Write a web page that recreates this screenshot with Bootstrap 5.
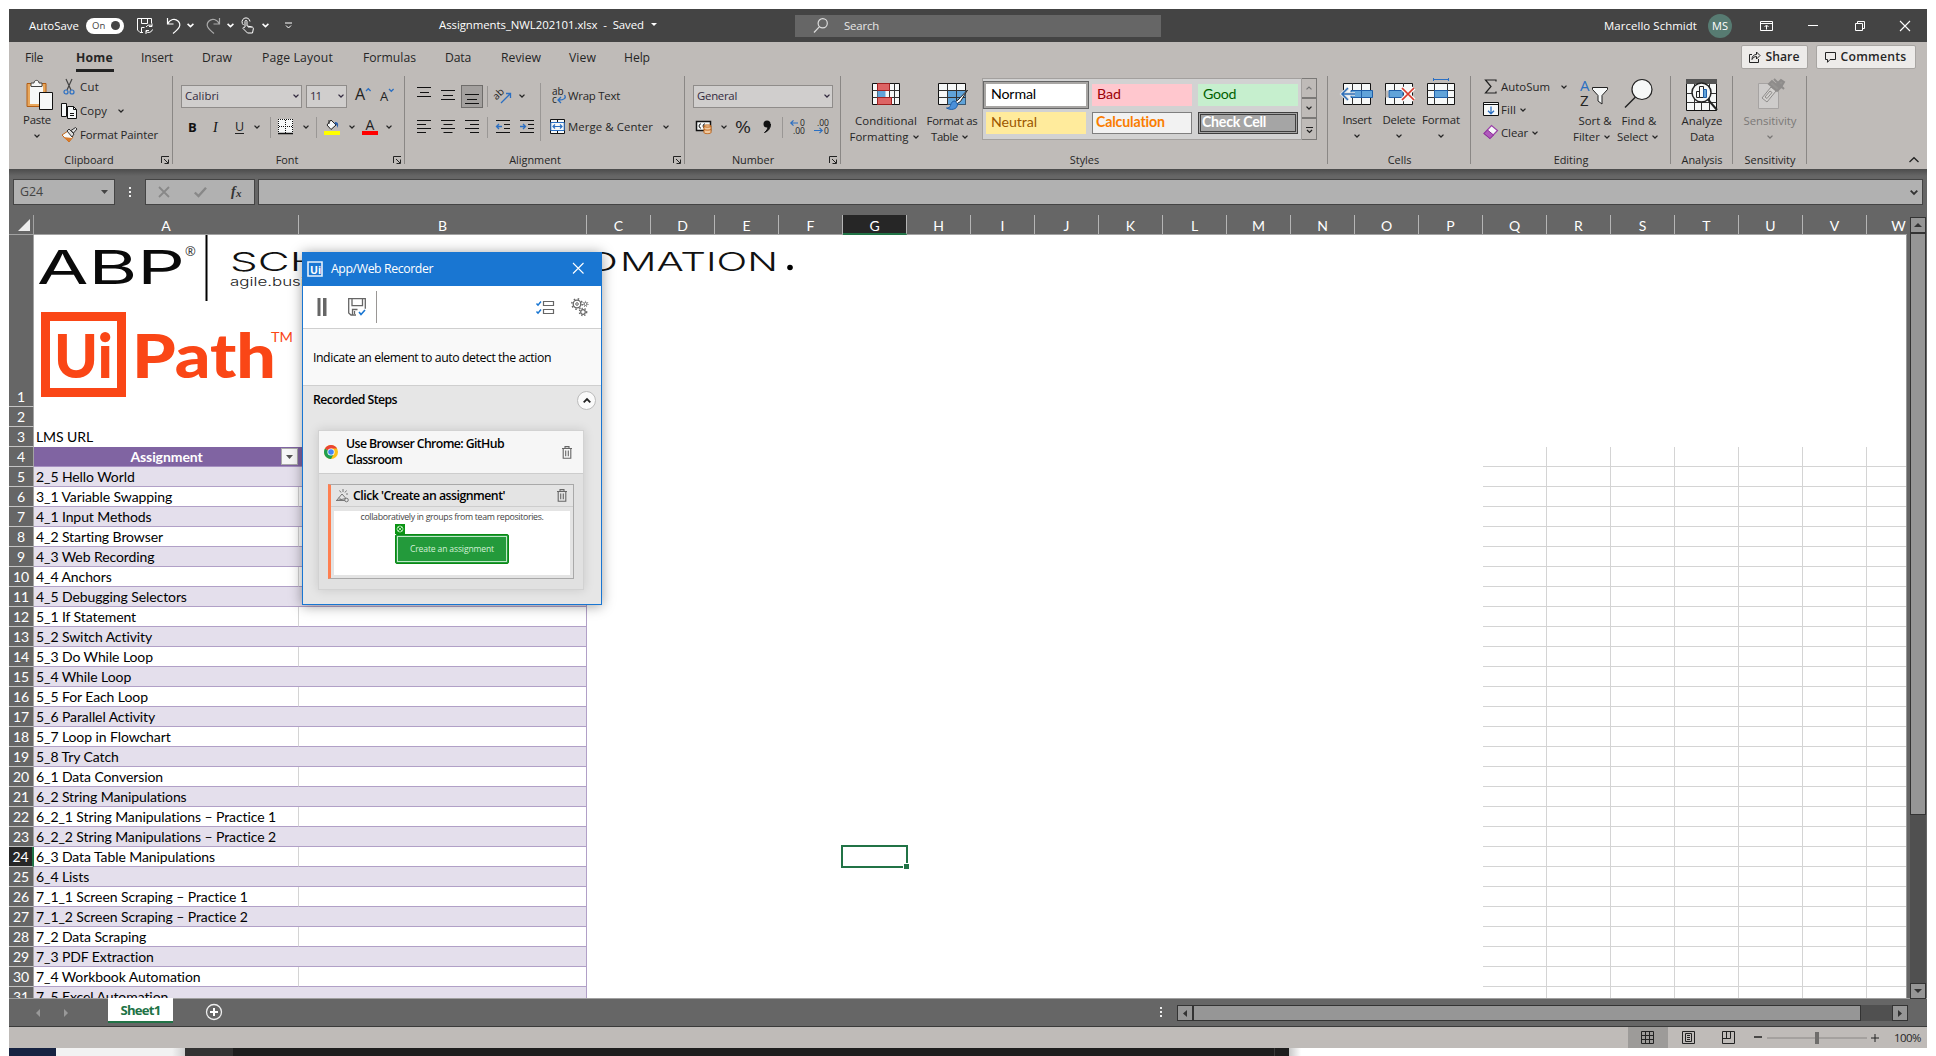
<!DOCTYPE html>
<html lang="en">
<head>
<meta charset="utf-8">
<title>Assignments_NWL202101.xlsx - Excel</title>
<link href="https://cdn.jsdelivr.net/npm/bootstrap@5.3.0/dist/css/bootstrap.min.css" rel="stylesheet">
<style>
:root{--ui:"Open Sans","Noto Sans",sans-serif;--sheet:Lato,"Open Sans",sans-serif;--dark:#444;--mid:#666;--rib:#bfbbb8;--ink:#262626}
body{width:1936px;height:1056px;overflow:hidden;background:#fff;font:11.4px/16px var(--ui);color:var(--ink)}
svg{display:block;overflow:visible;flex:none}
.fit{white-space:pre;justify-self:start}
.app{width:1918px;margin:9px 0 0 9px;height:1039px;background:var(--mid)}
.titlebar{height:33px;background:var(--dark);color:#fff;padding-left:20px;grid-template-columns:57px 51px 29px 21px 18px 22px 14px 21px 23px 154px 356px 809px 104px 52px 48px 47px 45px 27px}
.toggle{width:38px;height:16px;border-radius:8px;background:#fff;color:#444;font-size:9.5px;line-height:16px;padding:0 4px 0 6px}
.knob{width:9px;height:9px;border-radius:50%;background:#444}
.searchbox{width:366px;height:22px;background:var(--mid);color:#e6e6e6;padding-left:19px;gap:16px}
.avatar{width:24px;height:24px;border-radius:50%;background:#577b72;font-size:11px}
.doctitle{padding-bottom:2px}
.tabs{height:33px;background:var(--rib);font-size:12.2px;padding-left:16px;grid-template-columns:51px 65px 61px 60px 101px 82px 56px 68px 55px 1117px 75px 100px}
.tabs>.fit{height:24px;line-height:21px}
.tabs>.on{font-weight:700;border-bottom:3px solid #222;height:25px;line-height:21px;margin-top:2px;width:38px}
.wbtn{background:#edebe9;border:1px solid #a8a5a2;border-radius:2px;height:24px;margin-bottom:3px;gap:4px;font-weight:600}
.ribbon{height:94px;background:var(--rib)}
.grp{height:94px;background:linear-gradient(#8a8785,#8a8785) right 1px/1px 88px no-repeat}
.grp-body{height:77px}
.grp-label{height:17px;line-height:15px;font-size:10.9px;text-align:center;grid-template-columns:8px 1fr 12px}
.r24{height:24px}.r23{height:23px}.r32{height:32px}.r31{height:30px}
.big{line-height:16px;text-align:center}
.big svg{margin-inline:auto}
.cap2{height:16px;margin-top:2px}
.ctext{margin-top:6px}
.vchev{margin-top:6px}
.combo{height:23px;background:#d0cecd;border:1px solid #8f8c8a;padding:0 2px 0 3px;color:#332b40;line-height:20px}
.vsep{width:1px;height:21px;background:#9a9795}
.pressed{background:#a3a09e;border:1px solid #6f6d6b;width:22px;height:23px}
.gallery{width:320px;height:62px;background:#d2d2d2;border:1px solid #a3a09e;padding:5px 3px;grid-template-columns:100px 100px 100px;gap:6px;font:14.2px/20px var(--sheet)}
.gallery>div{height:22px;padding-left:5px}
.galwrap{margin:3px 0 0 9px}
.st-normal{background:#fff;color:#000;outline:2px solid #a8a6a4;box-shadow:0 0 0 3px #666}
.st-bad{background:#ffc7ce;color:#9c0006}.st-good{background:#c6efce;color:#006100}.st-neutral{background:#ffeb9c;color:#9c5700}
.st-calc{background:#f2f2f2;color:#fa7d00;border:1px solid #7f7f7f;font-weight:700;line-height:18px}
.gallery>.st-calc{padding-left:3px}
.st-check{background:#a5a5a5;color:#fff;border:3px double #3f3f3f;font-weight:700;line-height:14px}
.gallery>.st-check{padding-left:1px}
.gscroll{width:15px;height:62px;border:1px solid #7b7977;border-left:0}
.gscroll>div{border-bottom:2px solid #7b7977;height:20px}
.gscroll>div:last-child{border:0;height:21px}
.fbar{height:46px;padding-top:10px;padding-left:4px;background:linear-gradient(#4c4c4c,#666 7px)}
.fbox{height:26px;background:#b1b1b1;border:1px solid #444;color:#444}
.namebox{width:102px;padding:0 6px 0 6px;font-size:12.4px}
.fxbox{width:110px;margin-right:3px;grid-template-columns:36px 36px 38px}
.sheet{width:1898px;height:783px;overflow:hidden}
.colhead{height:20px;border-bottom:1px solid #a3a3a3;color:#fff;font:14px/21px var(--sheet);width:1960px}
.colhead>div{width:64px;flex:none;text-align:center;border-right:1px solid #b5b5b5;height:19px}
.colhead>.corner{width:25px;border-color:#a3a3a3;padding:4px 0 0 9px}
.colhead>.ca{width:265px}.colhead>.cb{width:288px}
.colhead>.sel{background:#262626;height:20px;border-bottom:2px solid #217346}
.cells{height:763px;background:#fff;overflow:hidden;border-right:1px solid #999;font:14px/19px var(--sheet);color:#000}
.gridlines{left:1474px;top:212px;right:0;bottom:0;background:repeating-linear-gradient(90deg,transparent 0 63px,#d4d4d4 63px 64px),repeating-linear-gradient(transparent 0 19px,#d4d4d4 19px 20px)}
.line{height:20px}
.line>div{flex:none;height:20px}
.rh{width:25px;background:var(--mid);color:#fff;border-bottom:1px solid #c4c4c4;border-right:1px solid #a3a3a3;text-align:center}
.rh.sel{background:#262626;border-right:2px solid #217346}
.line.tall,.line>.tall-h{height:172px}
.line>.tall-h{padding-top:152px}
.tA{width:265px;padding-left:2px;white-space:nowrap;letter-spacing:-.006em}
.tB{width:288px}
.hd>.tA,.hd>.tB{background:#8064a2;color:#fff;font-weight:700;border-bottom:1px solid #a58fc0}
.hd .lab{flex:1;text-align:center;padding-left:16px}
.dd{width:17px;height:17px;background:#f7f7f7;border:1px solid #aaa;margin-right:1px}
.odd>.tA,.odd>.tB{background:#e4dfec}
.odd>.tA,.odd>.tB,.even>.tA,.even>.tB{border-bottom:1px solid #b1a0c7}
.even>.tA{border-right:1px solid #d4d4d4}
.odd>.tB,.even>.tB,.hd>.tB{border-right:1px solid #b1a0c7}
.pics{left:25px;top:0}
.cursor{left:832px;top:610px}
.vscroll{width:20px;height:783px;padding:2px 0 0 3px}
.sbtn{background:#969696;border:1px solid #333;width:16px;height:16px}
.vtrack{background:#505050;width:16px;height:750px}
.vthumb{background:#969696;border:1px solid #333;height:582px}
.tabbar{height:28px;border-top:1px solid #a0a0a0;color:#fff}
.nav-arrows{width:99px;padding-left:27px;gap:23px}
.stab{width:65px;height:25px;margin-top:-1px;background:#fff;border-bottom:2px solid #217346;color:#217346;font:bold 13.2px/25px var(--ui);text-align:center}
.addsheet{margin:4px 0 0 40px}
.htrack{width:731px;height:16px;background:#505050;margin:6px 19px 0 0}
.hthumb{width:668px;height:16px;background:#969696;border:1px solid #333}
.status{height:22px;background:var(--rib);border-top:1px solid #3a3a3a;padding-left:1619px;grid-template-columns:40px 40px 40px 12px 14px 101px 19px 30px}
.viewon{background:#9d9b99;width:40px;height:21px;padding-right:2px}
.under{margin-left:9px;height:8px}
.under>div{height:8px}
.u1{width:47px;background:#172342}.u2{width:129px;background:linear-gradient(90deg,#f2f2f2 90%,#d0d0d0)}.u3{width:48px;background:#333}.u4{width:1056px;background:linear-gradient(90deg,#1e1e1e 1041px,#3a3a3a 1041px 1042px,#1e1e1e 1042px)}.u5{width:12px;background:linear-gradient(90deg,#c8c8c8,#fff)}
.recorder{left:302px;top:252px;width:300px;height:353px;background:#e6e6e6;border:1px solid #1976d2;box-shadow:0 1px 12px rgba(0,0,0,.38);color:#000;font-size:12.3px}
.rtitle{height:33px;background:#1976d2;color:#fff;padding-left:4px;padding-bottom:2px;grid-template-columns:24px 238px 20px}
.rtools{height:43px;background:#fff;border-bottom:1px solid #cfcfcf;padding-left:14px;grid-template-columns:31px 28px 160px 35px 20px}
.rmsg{height:57px;background:#f9f9f9;border-bottom:1px solid #cfcfcf;padding-left:10px;line-height:58px}
.rhead{height:28px;padding:0 5px 0 10px}
.rhead .fit{padding-bottom:1px}
.rb{font-weight:600}
.round{width:19px;height:19px;border-radius:50%;background:#fafafa;border:1px solid #bbb}
.rcard{margin:16px 0 0 15px;width:266px;height:160px;background:#e1e1e1;border:1px solid #d2d2d2;box-shadow:0 0 10px rgba(0,0,0,.13)}
.rch{height:43px;background:#f6f6f6;border-bottom:1px solid #cdcdcd;grid-template-columns:27px 216px 20px;padding-left:0}
.rstep{margin:10px 0 0 9px;width:246px;height:95px;border:1px solid #a9a9a9;border-left:3px solid #ff7f50;background:#e4e4e4}
.rsh{height:22px;border-bottom:1px solid #cdcdcd;grid-template-columns:22px 204px 15px}
.shot{margin:4px 0 0 3px;width:236px;height:64px;background:#fff;font-size:8.8px;color:#444;line-height:13px}
.shot>.text-center{height:13px}
.tag{width:10px;height:10px;background:#0a9413;margin-left:61px}
.gbtn{width:114px;height:30px;margin-left:61px;background:#239a3b;border:1px solid #0a8a12;outline:1px solid #bfe8c6;outline-offset:-3px;border-radius:2px;color:#d3f0d8;font-size:8.6px;line-height:28px;text-align:center}
.g-clip{width:164px}.g-font{width:232px}.g-align{width:280px}.g-num{width:156px}.g-sty{width:487px}.g-cells{width:143px}.g-edit{width:200px}.g-an{width:62px}.g-sens{width:74px}
.pasteb{width:48px;margin-left:4px;padding-top:5px}
.pasteb>svg:first-child{position:relative;left:2px}
.c-clip{grid-template-columns:19px auto 1fr}
.bt{padding-top:5px}
.f1{padding-left:8px;grid-template-columns:125px 49px 25px 20px}
.f2{padding-left:15px;grid-template-columns:24px 23px 19px 16px 8px 21px 17px 8px 21px 17px 20px 10px}
.a1{padding-left:12px;grid-template-columns:24px 20px 26px 8px 20px 10px}
.a2{padding-left:12px;grid-template-columns:24px 24px 22px 9px 24px 20px}
.wrapcol{margin-left:9px}
.wrapcol>.r32{padding-bottom:1px}
.n2{padding-left:11px;grid-template-columns:21px 18px 28px 19px 8px 24px 20px}
.condb{width:90px;padding-top:8px}.tblb{width:42px;padding-top:8px}
.cellb{width:42px;padding-top:3px}
.e1{grid-template-columns:19px auto 1fr}
.sumchev{margin:0 6px 0 11px}
.sortb{width:44px;padding-top:4px}
.fadeb{opacity:.45}
</style>
</head>
<body>
<svg width="0" height="0" class="position-absolute">
  <symbol id="chev" viewBox="0 0 6 4"><path d="M.5 .6 3 3 5.5 .6" fill="none" stroke="currentColor" stroke-width="1.3"/></symbol>
  <symbol id="launch" viewBox="0 0 8 8"><path d="M.5 7V.5H8M3 3l4 4M7.500 3.500v4h-4" fill="none" stroke="#222"/></symbol>
  <symbol id="bin" viewBox="0 0 10 13"><path d="M0 2.500h10M3 2.500V.6h4v1.900M1.200 2.500v9.800h7.600V2.500M3.700 4.500v5.800M6.300 4.500v5.800" fill="none" stroke="#666" stroke-width="1.100"/></symbol>
</svg>

<div class="app">
  <!-- Title bar -->
  <header class="titlebar d-grid align-items-center">
    <span class="fit" data-w="50">AutoSave</span>
    <span class="toggle d-flex align-items-center justify-content-between">On<i class="knob"></i></span>
    <svg width="16" height="16" fill="none" stroke="#fff"><path d="M6 14.500H3L.5 12V.5h14v5M4.500.5v5h6v-5M4.500 14.500v-5h3M9 9a4 4 0 0 1 6-1M15 5.500V8.500h-3M15.500 11.500a4 4 0 0 1-6.500 2M9 16v-3.500h3"/></svg>
    <svg width="16" height="16" fill="none" stroke="#fff" stroke-width="1.200"><path d="M1.500 0v6h6M1.500 6C4 1 9 0 12 3c4 4 1 8-5 12.500"/></svg>
    <svg width="7" height="5"><use href="#chev"/></svg>
    <svg width="16" height="16" fill="none" stroke="#aaa" stroke-width="1.200"><path d="M14.500 0v6h-6M14.500 6C12 1 7 0 4 3c-4 4-1 8 5 12.500"/></svg>
    <svg width="7" height="5"><use href="#chev"/></svg>
    <svg width="14" height="17" fill="none" stroke="#fff"><path d="M2.500 8A4 4 0 1 1 9 4.500M4 10V4.500c0-1.500 2-1.500 2 0V9l4.500.8c1.500.2 2 1 1.800 2.200l-.8 4H6.500L2 11.500c0-1.500 1.200-1.500 2-.5M8 9v2M10 9.500V11"/></svg>
    <svg width="7" height="5"><use href="#chev"/></svg>
    <svg width="8" height="7" fill="none" stroke="#fff"><path d="M0 1h7M1 3.500l2.500 2.500L6 3.500"/></svg>
    <span class="doctitle d-flex align-items-center"><span class="fit" data-w="205">Assignments_NWL202101.xlsx  -  Saved</span><svg class="ms-2" width="5" height="3"><path d="M-1 0h6L2 3z" fill="#fff"/></svg></span>
    <div class="searchbox d-flex align-items-center"><svg width="14" height="15" fill="none" stroke="#ddd" stroke-width="1.200"><circle cx="8.700" cy="5.300" r="4.600"/><path d="M5.500 8.700 0 14.500"/></svg><span class="fit" data-w="35">Search</span></div>
    <span class="fit" data-w="93">Marcello Schmidt</span>
    <span class="avatar d-flex align-items-center justify-content-center">MS</span>
    <svg width="13" height="10" fill="none" stroke="#fff"><path d="M.5.5h12v9H.5zM.5 2.500h12M6.500 8.500V4.500M4.500 6l2-2 2 2"/></svg>
    <svg width="10" height="1"><path d="M0 .5h10" stroke="#fff"/></svg>
    <svg width="10" height="10" fill="none" stroke="#fff"><path d="M.5 2.500h7v7h-7zM2.500 2.500v-2h7v7h-2"/></svg>
    <svg width="10" height="10" fill="none" stroke="#fff" stroke-width="1.100"><path d="M0 0l10 10M10 0 0 10"/></svg>
  </header>

  <!-- Ribbon tabs -->
  <nav class="tabs d-grid align-items-center">
    <span class="fit" data-w="18">File</span><span class="fit on" data-w="37">Home</span><span class="fit" data-w="32">Insert</span><span class="fit" data-w="30">Draw</span><span class="fit" data-w="71">Page Layout</span><span class="fit" data-w="53">Formulas</span><span class="fit" data-w="26">Data</span><span class="fit" data-w="40">Review</span><span class="fit" data-w="27">View</span><span class="fit" data-w="26">Help</span>
    <div class="wbtn d-flex align-items-center justify-content-center me-2"><svg width="12" height="12" fill="none" stroke="#222"><path d="M3 3.500H.5v8h9V8M3 8.500C3 5 5 3.500 7.500 3.500V1L11 4.500 7.500 8V5.500C5.500 5.500 4 6.500 3 8.500z"/></svg><span class="fit" data-w="34">Share</span></div>
    <div class="wbtn d-flex align-items-center justify-content-center"><svg width="11" height="11" fill="none" stroke="#222"><path d="M.5.5h10v7H5l-2.500 2.800V7.500H.5z"/></svg><span class="fit" data-w="66">Comments</span></div>
  </nav>

  <!-- Ribbon -->
  <section class="ribbon d-flex">
    <div class="grp g-clip">
      <div class="grp-body d-flex">
        <div class="big pasteb">
          <svg width="27" height="30"><path d="M1 3.500h19v23H1z" fill="#e8a75c" stroke="#b05c14"/><path d="M4 6h13v18H4z" fill="#f6f8f8"/><path d="M5 6.500V3h3c0-3.500 5-3.500 5 0h3v3.500z" fill="#f6f8f8" stroke="#444"/><path d="M13.500 12.500h13v17h-13z" fill="#f6f8f8" stroke="#111"/></svg>
          <div class="cap2"><span class="fit" data-w="28">Paste</span></div>
          <svg width="6" height="4" class="vchev"><use href="#chev"/></svg>
        </div>
        <div>
          <div class="r24 d-grid align-items-center c-clip"><svg width="16" height="16" fill="none"><path d="M5 0l5 11M11 0 6 11" stroke="#444" stroke-width="1.200"/><circle cx="5" cy="13" r="2" stroke="#2b6fc2" stroke-width="1.200"/><circle cx="11" cy="13" r="2" stroke="#2b6fc2" stroke-width="1.200"/></svg><span class="fit" data-w="19">Cut</span></div>
          <div class="r24 d-grid align-items-center c-clip"><svg width="16" height="16" fill="#f6f8f8" stroke="#111"><path d="M.5.5h5v13h-5z"/><path d="M6.500 3.500h6l3 3v9h-9z"/><path d="M12.500 3.500v3h3M9 10.500h4M9 12.500h4" fill="none"/></svg><span class="fit" data-w="27">Copy</span><svg class="ms-2" width="6" height="4"><path d="M3.500.6 6 3 8.500.6" fill="none" stroke="currentColor" stroke-width="1.300"/></svg></div>
          <div class="r24 d-grid align-items-center c-clip"><svg width="16" height="16"><path d="M1 8l6-4 5 6-4 5z" fill="#f6f8f8" stroke="#c0661a"/><path d="M2 10l6 5 3-4z" fill="#d97b2b"/><path d="M6 4l2-2 5 5-2 3zM10 3.500l4.500-3L16 2l-3.500 4z" fill="#ddd" stroke="#333"/></svg><span class="fit" data-w="78">Format Painter</span></div>
        </div>
      </div>
      <div class="grp-label d-grid"><span></span><span>Clipboard</span><svg class="mt-1" width="8" height="8"><use href="#launch"/></svg></div>
    </div>

    <div class="grp g-font">
      <div class="grp-body bt">
        <div class="r32 d-grid align-items-center f1">
          <div class="combo d-flex align-items-center justify-content-between me-1"><span class="fit" data-w="34">Calibri</span><svg width="6" height="4"><use href="#chev"/></svg></div>
          <div class="combo d-flex align-items-center justify-content-between me-2"><span class="fit" data-w="11">11</span><svg width="6" height="4"><use href="#chev"/></svg></div>
          <svg width="16" height="16"><text x="0" y="12" font-size="16" fill="#222">A</text><path d="M11 3l2.300-2.300L15.600 3" fill="none" stroke="#2b6fc2" stroke-width="1.300"/></svg>
          <svg width="14" height="16"><text x="0" y="12.500" font-size="13" fill="#222">A</text><path d="M9 1l2.300 2.300L13.600 1" fill="none" stroke="#2b6fc2" stroke-width="1.300"/></svg>
        </div>
        <div class="r31 d-grid align-items-center f2">
          <svg width="10" height="14"><text x="0" y="12" font-size="13" font-weight="700" fill="#111">B</text></svg>
          <svg width="10" height="14"><text x="1" y="12" font-size="14" font-family="Liberation Serif" font-style="italic" fill="#111">I</text></svg>
          <svg width="10" height="16"><text x="0" y="12" font-size="12.500" fill="#222">U</text><path d="M0 14.500h9" stroke="#222"/></svg>
          <svg width="6" height="4"><use href="#chev"/></svg><i class="vsep"></i>
          <svg width="16" height="16"><path d="M0 0h15v15H0z" fill="#f6f8f8"/><path d="M.5 0v14M14.500 0v14M0 .5h15M7.500 1v13M1 7.500h13" stroke="#111" stroke-dasharray="1 1"/><path d="M0 14.500h15" stroke="#111" stroke-width="1.500"/></svg>
          <svg width="6" height="4" class="ms-1"><use href="#chev"/></svg><i class="vsep"></i>
          <svg width="16" height="16"><path d="M3 6l4-5 5 5-5 4.500z" fill="#f6f8f8" stroke="#222"/><path d="M5 5V1" stroke="#222"/><path d="M11 3c3 0 4 2 2.500 6-.5-3-1.500-4-3-4z" fill="#2b5fa8"/><path d="M0 12h16v4H0z" fill="#ff0"/></svg>
          <svg width="6" height="4" class="ms-1"><use href="#chev"/></svg>
          <svg width="16" height="16"><text x="3.500" y="10.500" font-size="14" fill="#222">A</text><path d="M0 12h16v4H0z" fill="#f00"/></svg>
          <svg width="6" height="4" class="ms-1"><use href="#chev"/></svg>
        </div>
      </div>
      <div class="grp-label d-grid"><span></span><span>Font</span><svg class="mt-1" width="8" height="8"><use href="#launch"/></svg></div>
    </div>

    <div class="grp g-align">
      <div class="grp-body d-flex">
        <div class="bt">
          <div class="r32 d-grid align-items-center a1">
            <svg width="14" height="18" stroke="#111"><path d="M0 .5h14M3 5.500h9M0 9.500h14"/></svg>
            <svg width="14" height="18" stroke="#111"><path d="M0 3.500h14M2 8.500h10M0 12.500h14"/></svg>
            <div class="pressed d-flex align-items-center justify-content-center"><svg width="14" height="18" stroke="#111"><path d="M0 7.500h14M2 12.500h10M0 16.500h14"/></svg></div>
            <i class="vsep"></i>
            <svg width="16" height="16"><text font-size="10" transform="rotate(-45 5 9)" x="0" y="9" fill="#222">ab</text><path d="M6 15l9-9M11 5.500h4.500V10" fill="none" stroke="#2b6fc2" stroke-width="1.300"/></svg>
            <svg width="6" height="4" class="ms-1"><use href="#chev"/></svg>
          </div>
          <div class="r31 d-grid align-items-center a2">
            <svg width="14" height="14" stroke="#111"><path d="M0 .5h14M0 4.500h9M0 8.500h14M0 12.500h9"/></svg>
            <svg width="14" height="14" stroke="#111"><path d="M0 .5h14M2.500 4.500h9M0 8.500h14M2.500 12.500h9"/></svg>
            <svg width="14" height="14" stroke="#111"><path d="M0 .5h14M5 4.500h9M0 8.500h14M5 12.500h9"/></svg>
            <i class="vsep"></i>
            <svg width="14" height="14" fill="none" stroke="#111"><path d="M0 .5h14M8 4.500h6M8 8.500h6M0 12.500h14"/><path d="M6 6.500H.5M3 4 .5 6.500 3 9" stroke="#2b6fc2" stroke-width="1.300"/></svg>
            <svg width="14" height="14" fill="none" stroke="#111"><path d="M0 .5h14M8 4.500h6M8 8.500h6M0 12.500h14"/><path d="M0 6.500h5.500M3 4l2.500 2.500L3 9" stroke="#2b6fc2" stroke-width="1.300"/></svg>
          </div>
        </div>
        <i class="vsep h-75 mt-2"></i>
        <div class="wrapcol bt">
          <div class="r32 d-flex align-items-center"><svg width="18" height="16"><text x="2" y="7" font-size="10" fill="#222">ab</text><text x="2" y="15" font-size="10" fill="#222">c</text><path d="M14.500 7c2 3 0 5-6 5M11 9 8 12l3 3" fill="none" stroke="#2b6fc2" stroke-width="1.300"/></svg><span class="fit" data-w="52">Wrap Text</span></div>
          <div class="r31 d-flex align-items-center"><svg width="18" height="16"><path d="M.5.5h14v14H.5z" fill="#f6f8f8" stroke="#111"/><path d="M7.500 0v15" stroke="#111"/><path d="M.8 3.500h13.400v8H.8z" fill="#f6f8f8" stroke="#2b6fc2"/><path d="M3 7.500h9M5 5.500l-2 2 2 2M10 5.500l2 2-2 2" fill="none" stroke="#2b6fc2" stroke-width="1.200"/></svg><span class="fit" data-w="85">Merge &amp; Center</span><svg width="6" height="4" class="ms-2"><path d="M2.500.6 5 3 7.500.6" fill="none" stroke="currentColor" stroke-width="1.300"/></svg></div>
        </div>
      </div>
      <div class="grp-label d-grid"><span></span><span class="pe-3">Alignment</span><svg class="mt-1" width="8" height="8"><use href="#launch"/></svg></div>
    </div>

    <div class="grp g-num">
      <div class="grp-body bt">
        <div class="r32 d-grid align-items-center px-2"><div class="combo d-flex align-items-center justify-content-between"><span class="fit" data-w="40">General</span><svg width="6" height="4"><use href="#chev"/></svg></div></div>
        <div class="r31 d-grid align-items-center n2">
          <svg width="16" height="14"><path d="M.5 1.500h14v9H.5z" fill="#f6f8f8" stroke="#111" stroke-width="1.500"/><path d="M5 4C2.500 3.500 2.500 8.500 5 8M9 4c-2.500-.5-2.500 4.500 0 4" fill="none" stroke="#111"/><path d="M8 6v6.500c0 1.500 7 1.500 7 0V6c0-1.500-7-1.500-7 0z" fill="#f0c9a0" stroke="#c0661a"/><path d="M8 6c0 1.500 7 1.500 7 0M8 9c0 1.500 7 1.500 7 0" fill="none" stroke="#c0661a"/></svg>
          <svg width="6" height="4" class="ms-1"><use href="#chev"/></svg>
          <svg width="16" height="16"><text x="0" y="14" font-size="17" fill="#222" textLength="16" lengthAdjust="spacingAndGlyphs">%</text></svg>
          <svg width="9" height="14"><circle cx="4" cy="4" r="3.500" fill="#111"/><path d="M7.500 4c0 5-3 7.500-6 8.500 2.500-2 3-3 3.500-6z" fill="#111" stroke="#111"/></svg>
          <i class="vsep"></i>
          <svg width="16" height="16"><text x="10" y="7" font-size="8.500" fill="#222">0</text><text x="3" y="15" font-size="8.500" fill="#222">.00</text><path d="M8 4H.8M3.500 1.300.8 4l2.700 2.700" fill="none" stroke="#2b6fc2" stroke-width="1.200"/></svg>
          <svg width="16" height="16"><text x="3" y="7" font-size="8.500" fill="#222">.00</text><text x="10" y="15" font-size="8.500" fill="#222">0</text><path d="M0 11.500h8M5.500 8.800 8.200 11.500l-2.700 2.700" fill="none" stroke="#2b6fc2" stroke-width="1.200"/></svg>
        </div>
      </div>
      <div class="grp-label d-grid"><span></span><span class="pe-3">Number</span><svg class="mt-1" width="8" height="8"><use href="#launch"/></svg></div>
    </div>

    <div class="grp g-sty">
      <div class="grp-body d-flex">
        <div class="big condb">
          <svg width="28" height="22"><path d="M.5.5h27v21H.5z" fill="#f6f8f8" stroke="#111"/><path d="M.5 7.500h27M.5 14.500h27M5.500.5v21M17.500.5v21M22.500.5v21" stroke="#333"/><path d="M5.500.5h12v7h-12zM5.500 14.500h14v7h-14z" fill="#dd6464" stroke="#a02020"/><path d="M5.500 8h8v6h-8z" fill="#60a3d9"/></svg>
          <div class="mt-2"><span class="fit" data-w="62">Conditional</span></div><div class="d-flex align-items-center justify-content-center"><span class="fit" data-w="59">Formatting</span><svg width="6" height="4" class="mx-1"><use href="#chev"/></svg></div>
        </div>
        <div class="big tblb">
          <svg width="28" height="22"><path d="M.5.5h27v21H.5z" fill="#f6f8f8" stroke="#111"/><path d="M9.500 7.500h18v14h-18z" fill="#60a3d9"/><path d="M.5 7.500h27M.5 14.500h27M9.500.5v21M18.500.5v21" stroke="#333"/><path d="M29.500 7 20 17l-3 2 1.500 2 4-2.500z" fill="#fff" stroke="#222"/><path d="M17 18c-3 0-4 2-4.500 4.500-.5 2-2 2.500-4 2.500 4 2.500 11 2 11-4z" fill="#4a90d9" stroke="#1f5fa8"/></svg>
          <div class="mt-2 d-flex justify-content-center"><span class="fit" data-w="51">Format as</span></div><div class="d-flex align-items-center justify-content-center"><span class="fit" data-w="27">Table</span><svg width="6" height="4" class="ms-1"><use href="#chev"/></svg></div>
        </div>
        <div class="d-flex galwrap">
          <div class="gallery d-grid">
            <div class="st-normal"><span class="fit" data-w="45">Normal</span></div><div class="st-bad">Bad</div><div class="st-good"><span class="fit" data-w="33">Good</span></div>
            <div class="st-neutral"><span class="fit" data-w="46">Neutral</span></div><div class="st-calc"><span class="fit" data-w="69">Calculation</span></div><div class="st-check"><span class="fit" data-w="64">Check Cell</span></div>
          </div>
          <div class="gscroll"><div class="d-flex align-items-center justify-content-center"><svg width="6" height="4"><path d="M.5 3.400 3 1l2.500 2.400" fill="none" stroke="#777" stroke-width="1.200"/></svg></div><div class="d-flex align-items-center justify-content-center"><svg width="6" height="4"><use href="#chev"/></svg></div><div class="d-flex align-items-center justify-content-center"><svg width="7" height="6"><path d="M0 .5h7M1 3l2.500 2.500L6 3" fill="none" stroke="#222" stroke-width="1.200"/></svg></div></div>
        </div>
      </div>
      <div class="grp-label">Styles</div>
    </div>

    <div class="grp g-cells">
      <div class="grp-body d-flex ps-2">
        <div class="big cellb">
          <svg width="32" height="28"><path d="M2.500 5.500h27v21h-27z" fill="#f6f8f8" stroke="#111"/><path d="M11.500 5v22M20.500 5v22" stroke="#333"/><path d="M10 12.500h21.500v7H10z" fill="#60a3d9" stroke="#1f5fa8"/><path d="M20.500 12.500v7" stroke="#1f5fa8"/><path d="M14 16H1.500M7 10 1 16l6 6" fill="none" stroke="#dfe3e6" stroke-width="3.500"/><path d="M14 16H1.500M7 10 1 16l6 6" fill="none" stroke="#2f6fb8" stroke-width="1.500"/></svg>
          <div class="ctext"><span class="fit" data-w="29">Insert</span></div><svg width="6" height="4" class="vchev"><use href="#chev"/></svg>
        </div>
        <div class="big cellb">
          <svg width="28" height="28"><path d="M.5 5.500h27v21H.5z" fill="#f6f8f8" stroke="#111"/><path d="M9.500 5v22M18.500 5v22" stroke="#333"/><path d="M.5 12.500h3v7h-3z" fill="#bfbbb8"/><path d="M4 12.500h14v7H4z" fill="#60a3d9" stroke="#1f5fa8"/><path d="M17 10l12 12M29 10 17 22" stroke="#f6f8f8" stroke-width="4"/><path d="M17 10l12 12M29 10 17 22" stroke="#d93a2b" stroke-width="1.700"/></svg>
          <div class="ctext"><span class="fit" data-w="33">Delete</span></div><svg width="6" height="4" class="vchev"><use href="#chev"/></svg>
        </div>
        <div class="big cellb">
          <svg width="28" height="28"><path d="M.5 5.500h27v21H.5z" fill="#f6f8f8" stroke="#111"/><path d="M.5 12.500h27M.5 19.500h27M7.500 5v22M20.500 5v22" stroke="#333"/><path d="M7.500 12.500h13v7h-13z" fill="#60a3d9" stroke="#1f5fa8"/><path d="M6.500 1.500h15M6.500 0v3M21.500 0v3" stroke="#2b6fc2"/></svg>
          <div class="ctext"><span class="fit" data-w="38">Format</span></div><svg width="6" height="4" class="vchev"><use href="#chev"/></svg>
        </div>
      </div>
      <div class="grp-label">Cells</div>
    </div>

    <div class="grp g-edit">
      <div class="grp-body d-flex">
        <div class="ms-2 ps-1">
          <div class="r23 d-flex align-items-center"><svg width="18" height="15"><path d="M13 2.500V1H2.500L8 7.500 2.500 14H13v-1.500" fill="none" stroke="#222" stroke-width="1.200"/></svg><span class="fit" data-w="49">AutoSum</span><svg width="6" height="4" class="sumchev"><use href="#chev"/></svg></div>
          <div class="r23 d-flex align-items-center"><svg width="18" height="15"><path d="M.5.5h15v13H.5z" fill="#f6f8f8" stroke="#111"/><path d="M0 2.500h16" stroke="#111"/><path d="M8 4.500v7M5 8.800l3 3 3-3" fill="none" stroke="#2b6fc2" stroke-width="1.300"/></svg><span class="fit" data-w="15">Fill</span><svg width="6" height="4" class="ms-1"><use href="#chev"/></svg></div>
          <div class="r23 d-flex align-items-center"><svg width="18" height="15"><path d="M1 8.500 8.500.5l6 5L7 13.500z" fill="#f6f8f8" stroke="#9b3fa8" stroke-width="1.200"/><path d="M1 8.500 4.500 5l6 5L7 13.500z" fill="#b05abc" stroke="#8a2f98"/></svg><span class="fit" data-w="27">Clear</span><svg width="6" height="4" class="ms-1"><use href="#chev"/></svg></div>
        </div>
        <div class="big sortb">
          <svg width="28" height="28"><text x="-1" y="11.500" font-size="15" fill="#2b6fc2">A</text><text x="-1" y="27" font-size="15" fill="#222">Z</text><path d="M11.500 8.500h15v2L21 16.500V25l-4-3v-5.500l-5.500-6z" fill="#f6f8f8" stroke="#222"/></svg>
          <div class="ctext"><span class="fit" data-w="33">Sort &amp;</span></div><div class="d-flex align-items-center justify-content-center"><span class="fit" data-w="27">Filter</span><svg width="6" height="4" class="ms-1"><use href="#chev"/></svg></div>
        </div>
        <div class="big sortb">
          <svg width="28" height="28"><circle cx="17" cy="10.500" r="10" fill="#f6f8f8" stroke="#222" stroke-width="1.200"/><path d="M10.500 18 0 28.500" stroke="#222" stroke-width="1.400"/></svg>
          <div class="ctext"><span class="fit" data-w="35">Find &amp;</span></div><div class="d-flex align-items-center justify-content-center"><span class="fit" data-w="31">Select</span><svg width="6" height="4" class="ms-1"><use href="#chev"/></svg></div>
        </div>
      </div>
      <div class="grp-label">Editing</div>
    </div>

    <div class="grp g-an">
      <div class="grp-body big pt-1">
        <svg width="32" height="32"><path d="M.5.500h30v31H.5z" fill="#f6f8f8" stroke="#111"/><path d="M0 0h31v5H0z" fill="#555"/><path d="M.5 14.500h30M.5 23.500h30M8.500 5v26M23.500 5v26M15.500 23v8" stroke="#333"/><circle cx="15.500" cy="13.500" r="9.500" fill="#f6f8f8" stroke="#222" stroke-width="1.500"/><path d="M10.500 12.500h3v6h-3zM13.500 7.500h4v11h-4z" fill="#f6f8f8" stroke="#222"/><path d="M17.500 10.500h3v8h-3z" fill="#60a3d9" stroke="#1f5fa8"/><path d="M22 20.500 31 31" stroke="#222" stroke-width="2"/></svg>
        <div class="cap2"><span class="fit" data-w="41">Analyze</span></div><span class="fit" data-w="24">Data</span>
      </div>
      <div class="grp-label">Analysis</div>
    </div>
    <div class="grp g-sens">
      <div class="grp-body big pt-1 fadeb">
        <svg width="24" height="32"><path d="M.5 4.500h20v25H.5z" fill="#e2e2e2" stroke="#888"/><path d="M4 19 13 8l5 4-9 11z" fill="#eee" stroke="#555"/><path d="M7 18l5-6 2 1.500-5 6z" fill="none" stroke="#555"/><path d="M11 5l8 7 3-3-8-7zM16 0l10 10M19 5l4-4 3 2-3 5z" fill="#666" stroke="#555" stroke-width="2"/></svg>
        <div class="cap2"><span class="fit" data-w="53">Sensitivity</span></div><svg width="6" height="4" class="vchev"><use href="#chev"/></svg>
      </div>
      <div class="grp-label">Sensitivity</div>
    </div>
    <div class="flex-fill d-flex justify-content-end align-items-end pe-2 pb-1"><svg width="10" height="8"><path d="M.5 5 5 .7 9.500 5" fill="none" stroke="#222" stroke-width="1.300"/></svg></div>
  </section>

  <!-- Formula bar -->
  <div class="fbar d-flex">
    <div class="fbox namebox d-flex align-items-center justify-content-between"><span class="fit" data-w="23">G24</span><svg width="7" height="4"><path d="M0 0h7L3.500 4z" fill="#444"/></svg></div>
    <svg width="30" height="26" fill="#eee"><path d="M14 8h2v2h-2zM14 12h2v2h-2zM14 16h2v2h-2z"/></svg>
    <div class="fbox fxbox d-grid align-items-center">
      <svg class="mx-auto" width="10" height="10" stroke="#888" stroke-width="1.800"><path d="M0 0l10 10M10 0 0 10"/></svg>
      <svg class="mx-auto" width="13" height="10" fill="none" stroke="#888" stroke-width="2.400"><path d="M.8 5.500 4.500 9 12 .8"/></svg>
      <svg class="mx-auto" width="12" height="14"><text x="0" y="11" font-family="Liberation Serif" font-style="italic" font-weight="700" font-size="14" fill="#333">f</text><text x="5" y="11.500" font-family="Liberation Serif" font-style="italic" font-weight="700" font-size="11" fill="#333">x</text></svg>
    </div>
    <div class="fbox flex-fill d-flex align-items-center justify-content-end me-1 pe-1"><svg width="8" height="5"><path d="M.7.7 4 4 7.300.7" fill="none" stroke="#333" stroke-width="1.800"/></svg></div>
  </div>

  <!-- Worksheet -->
  <div class="d-flex">
    <div class="sheet">
      <div class="colhead d-flex" id="colhead"><div class="corner"><svg width="12" height="12"><path d="M12 0v12H0z" fill="#eee"/></svg></div></div>
      <div class="cells position-relative" id="cells">
        <div class="gridlines position-absolute"></div>
        <svg class="pics position-absolute z-1" width="780" height="172" font-family="Inter, Lato, sans-serif">
          <text x="3" y="49" font-size="46" fill="#0a0a0a" font-weight="400" textLength="148" lengthAdjust="spacingAndGlyphs">ABP</text>
          <text x="151" y="21" font-size="13" fill="#333" font-family="Open Sans">®</text>
          <path d="M172.500 0v66" stroke="#000" stroke-width="2"/>
          <text x="196" y="35.500" font-size="26" font-weight="300" fill="#111" textLength="388" lengthAdjust="spacingAndGlyphs">SCHOOL OF AUTO</text>
          <text x="586" y="35.500" font-size="26" font-weight="300" fill="#111" textLength="158" lengthAdjust="spacingAndGlyphs">MATION</text>
          <circle cx="756" cy="32.500" r="2.800" fill="#000"/>
          <text x="196" y="50.500" font-size="11.500" font-weight="300" fill="#222" textLength="112" lengthAdjust="spacingAndGlyphs">agile.business</text>
          <path d="M11.500 81.500h76v76h-76z" fill="none" stroke="#fa4616" stroke-width="9"/>
          <text x="20" y="143" font-size="60" font-family="Lato" font-weight="900" fill="#fa4616" textLength="59" lengthAdjust="spacingAndGlyphs">Ui</text>
          <text x="98" y="143" font-size="60" font-family="Lato" font-weight="900" fill="#fa4616" textLength="144" lengthAdjust="spacingAndGlyphs">Path</text>
          <text x="237" y="107" font-size="14" font-family="Lato" fill="#fa4616" textLength="22" lengthAdjust="spacingAndGlyphs">TM</text>
        </svg>
        <svg class="cursor position-absolute" width="70" height="25"><path d="M1 1h65v21H1z" fill="none" stroke="#217346" stroke-width="2"/><path d="M62 18h6v6h-6z" fill="#fff"/><path d="M63 19h5v5h-5z" fill="#217346"/></svg>
      </div>
    </div>
    <div class="vscroll">
      <div class="sbtn d-flex align-items-center justify-content-center"><svg width="8" height="4"><path d="M0 4 4 0l4 4z" fill="#333"/></svg></div>
      <div class="vtrack"><div class="vthumb"></div></div>
      <div class="sbtn d-flex align-items-center justify-content-center"><svg width="8" height="4"><path d="M0 0h8L4 4z" fill="#333"/></svg></div>
    </div>
  </div>

  <!-- Sheet tabs -->
  <div class="tabbar d-flex">
    <div class="nav-arrows d-flex align-items-center"><svg width="5" height="8"><path d="M4 0v8L0 4z" fill="#999"/></svg><svg width="5" height="8"><path d="M0 0v8l4-4z" fill="#999"/></svg></div>
    <div class="stab"><span class="fit" data-w="40">Sheet1</span></div>
    <svg class="addsheet" width="17" height="17"><circle cx="1" cy="9" r="7.500" fill="none" stroke="#eee" stroke-width="1.300"/><path d="M-3 9h8M1 5v8" stroke="#fff" stroke-width="2"/></svg>
    <div class="flex-fill"></div>
    <svg width="25" height="28" fill="#eee"><path d="M8 8h2v2H8zM8 12h2v2H8zM8 16h2v2H8z"/></svg>
    <div class="htrack d-flex"><div class="sbtn d-flex align-items-center justify-content-center"><svg width="4" height="7"><path d="M4 0v7L0 3.500z" fill="#333"/></svg></div><div class="hthumb"></div><div class="sbtn d-flex align-items-center justify-content-center ms-auto"><svg width="4" height="7"><path d="M0 0v7l4-3.500z" fill="#333"/></svg></div></div>
  </div>

  <!-- Status bar -->
  <footer class="status d-grid align-items-center">
    <div class="viewon d-flex align-items-center justify-content-center"><svg width="13" height="13" fill="none" stroke="#222"><path d="M.5.5h12v12H.5zM4.500.5v12M8.500.5v12M.5 4.500h12M.5 8.500h12"/></svg></div>
    <svg class="mx-auto" width="13" height="13" fill="none" stroke="#222"><path d="M.5.5h12v12H.5zM3.500 2.500h6v8h-6zM5 4.500h3M5 6.500h3M5 8.500h3"/></svg>
    <svg class="mx-auto" width="13" height="13" fill="none" stroke="#222"><path d="M.5.5h12v12H.5zM4.500.5v7M8.500.5v7H.5"/></svg>
    <span></span>
    <svg width="8" height="2"><path d="M-6 0h8" stroke="#222" stroke-width="1.500"/></svg>
    <svg width="100" height="12"><path d="M-7 6h100" stroke="#8a8785"/><path d="M41 0h4v12h-4z" fill="#6f6d6b"/></svg>
    <svg width="8" height="8"><path d="M-4 4h8M0 0v8" stroke="#222"/></svg>
    <span class="fit" data-w="27">100%</span>
  </footer>
</div>
<div class="under d-flex"><div class="u1"></div><div class="u2"></div><div class="u3"></div><div class="u4"></div><div class="u5"></div></div>

<!-- Floating recorder window -->
<div class="recorder position-absolute z-2">
  <div class="rtitle d-grid align-items-center">
    <svg width="16" height="16"><path d="M1 1h14v14H1z" fill="#1976d2" stroke="#e8f2fc" stroke-width="1.600"/><text x="3" y="12.500" font-size="10.500" font-weight="700" fill="#fff">Ui</text></svg>
    <span class="fit" data-w="102">App/Web Recorder</span>
    <svg width="11" height="11" stroke="#fff" stroke-width="1.100" class="ms-1"><path d="M0 0l10.500 10.500M10.500 0 0 10.500"/></svg>
  </div>
  <div class="rtools d-grid align-items-center">
    <svg width="10" height="18"><path d="M.5 0h3v18h-3zM6 0h3.500v18H6z" fill="#666"/></svg>
    <svg width="18" height="19" fill="none" stroke="#666" stroke-width="1.300"><path d="M8 17H3L.7 15V.7h16.600v10M4 .7v7h10.500v-7M4.500 17v-5.500h5M6.500 13v3"/><path d="M11 14l2 2.500 4-4.500" stroke="#1976d2" stroke-width="1.600"/></svg>
    <i class="vsep h-75"></i>
    <svg width="18" height="15" fill="none" stroke="#666" stroke-width="1.200"><path d="M7.500 1.500h10v4h-10zM7.500 9.500h10v4h-10z"/><path d="M.5 3.500 2 5.200 5 1.500M.5 11.500 2 13.200 5 9.500" stroke="#1976d2" stroke-width="1.500"/></svg>
    <svg width="18" height="18" fill="none" stroke="#666"><circle cx="6" cy="6" r="3.800" stroke-width="1.300"/><circle cx="6" cy="6" r="1.300"/><circle cx="6" cy="6" r="5.200" stroke-width="1.500" stroke-dasharray="1.500 2.600"/><circle cx="14.500" cy="6" r="1.500"/><circle cx="14.500" cy="6" r="2.600" stroke-dasharray="1 1.300"/><circle cx="12" cy="14" r="2.300" stroke-width="1.200"/><circle cx="12" cy="14" r="3.700" stroke-width="1.300" stroke-dasharray="1.300 1.800"/></svg>
  </div>
  <div class="rmsg"><span class="fit" data-w="238">Indicate an element to auto detect the action</span></div>
  <div class="rhead d-flex align-items-center justify-content-between"><span class="fit rb" data-w="84">Recorded Steps</span><div class="round d-flex align-items-center justify-content-center"><svg width="8" height="5"><path d="M.7 4.300 4 1l3.300 3.300" fill="none" stroke="#222" stroke-width="1.800"/></svg></div></div>
  <div class="rcard">
    <div class="rch d-grid align-items-center rb">
      <svg class="ms-1" width="15" height="14" viewBox="-1 0 15 14"><circle cx="7" cy="7" r="7" fill="#fbc116"/><path d="M.94 3.500A7 7 0 0 0 7 14L10 8.500 7 7z" fill="#1e9e50"/><path d="M7 7 .94 3.500A7 7 0 0 1 13.060 3.500H7z" fill="#ea4335"/><circle cx="7" cy="7" r="3.600" fill="#fff"/><circle cx="7" cy="7" r="2.800" fill="#4285f4"/></svg>
      <div><span class="fit" data-w="158">Use Browser Chrome: GitHub</span><br><span class="fit" data-w="56">Classroom</span></div>
      <svg width="10" height="13"><use href="#bin"/></svg>
    </div>
    <div class="rstep">
      <div class="rsh d-grid align-items-center rb">
        <svg class="ms-1" width="14" height="14" fill="none" stroke="#777"><path d="M1.500 11.500 7 5l4 4.500zM1 11.500h9M4 8.500l2.500 2.500M8 0v3M4.500 1.500l1.500 2M11.500 1.500 10 3.500M13 5h-2"/><circle cx="11.500" cy="11" r="1.800"/></svg>
        <span class="fit" data-w="152">Click 'Create an assignment'</span>
        <svg width="10" height="13"><use href="#bin"/></svg>
      </div>
      <div class="shot"><div class="text-center"><span class="fit" data-w="183">collaboratively in groups from team repositories.</span></div>
        <div class="tag"><svg width="10" height="9" fill="none" stroke="#c9f0cc" stroke-width=".8"><circle cx="5" cy="5" r="3"/><path d="M3 3l4 4M7 3 3 7"/></svg></div>
        <div class="gbtn"><span class="fit" data-w="84">Create an assignment</span></div>
      </div>
    </div>
  </div>
</div>

<script src="https://cdn.jsdelivr.net/npm/bootstrap@5.3.0/dist/js/bootstrap.bundle.min.js"></script>
<script>
  const colhead = document.getElementById('colhead');
  [...'ABCDEFGHIJKLMNOPQRSTUVW'].forEach(c => {
    const extra = {A: 'ca', B: 'cb', G: 'sel'}[c] || '';
    colhead.insertAdjacentHTML('beforeend', `<div class="${extra}">${c}</div>`);
  });
  const names = ['2_5 Hello World','3_1 Variable Swapping','4_1 Input Methods','4_2 Starting Browser','4_3 Web Recording','4_4 Anchors','4_5 Debugging Selectors','5_1 If Statement','5_2 Switch Activity','5_3 Do While Loop','5_4 While Loop','5_5 For Each Loop','5_6 Parallel Activity','5_7 Loop in Flowchart','5_8 Try Catch','6_1 Data Conversion','6_2 String Manipulations','6_2_1 String Manipulations – Practice 1','6_2_2 String Manipulations – Practice 2','6_3 Data Table Manipulations','6_4 Lists','7_1_1 Screen Scraping – Practice 1','7_1_2 Screen Scraping – Practice 2','7_2 Data Scraping','7_3 PDF Extraction','7_4 Workbook Automation','7_5 Excel Automation'];
  const cells = document.getElementById('cells');
  for (let n = 1; n <= 31; n++) {
    const kind = n < 4 ? '' : n === 4 ? 'hd' : n % 2 ? 'odd' : 'even';
    let a = n === 3 ? 'LMS URL' : n > 4 ? names[n - 5] : '';
    if (n === 4) a = '<span class="lab">Assignment</span><span class="dd d-flex align-items-center justify-content-center"><svg width="7" height="4"><path d="M0 0h7L3.500 4z" fill="#555"/></svg></span>';
    cells.insertAdjacentHTML('beforeend', `<div class="line d-flex ${n === 1 ? 'tall' : ''} ${kind}"><div class="rh ${n === 1 ? 'tall-h' : ''} ${n === 24 ? 'sel' : ''}">${n}</div><div class="tA ${n === 4 ? 'd-flex align-items-center' : ''}">${a}</div><div class="tB"></div></div>`);
  }
  // Labels keep their design width whatever font is picked
  document.querySelectorAll('[data-w]').forEach(el => {
    const w = +el.dataset.w, r = document.createRange();
    r.selectNodeContents(el);
    const gap = (w - r.getBoundingClientRect().width) / el.textContent.length;
    el.style.letterSpacing = gap.toFixed(3) + 'px';
  });
</script>
</body>
</html>
